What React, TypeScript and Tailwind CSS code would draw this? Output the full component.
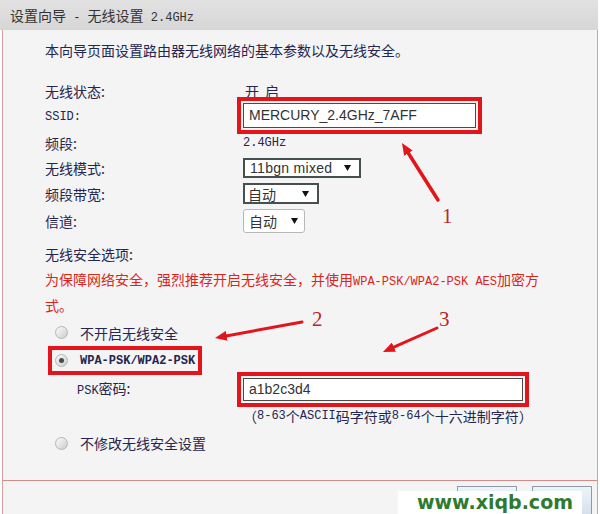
import React from 'react';

const mono = "font-['Liberation_Mono',monospace]";
const arial = "font-['Liberation_Sans',Arial,sans-serif]";

const Caret = () => (
  <svg width="7" height="6" viewBox="0 0 7 6" className="shrink-0">
    <path d="M0 0h7L3.5 6z" fill="#111" />
  </svg>
);

const Radio = ({ checked = false }: { checked?: boolean }) => (
  <span className="w-[13px] h-[13px] shrink-0 rounded-full border border-[#b4b4b4] bg-linear-to-br from-[#fbfbfb] via-[#e4e4e4] to-[#cdcdcd] flex items-center justify-center">
    {checked && <span className="w-[5px] h-[5px] rounded-full bg-[#4a4a4a]" />}
  </span>
);

const Row = ({ label, h, children }: { label: React.ReactNode; h: string; children?: React.ReactNode }) => (
  <div className={`flex items-center ${h}`}>
    <div className="w-[198px] shrink-0">{label}</div>
    <div className="flex items-center">{children}</div>
  </div>
);

export default function App() {
  return (
    <div className="relative w-[600px] h-[514px] overflow-hidden bg-white font-['Noto_Sans_CJK_SC',sans-serif] text-[14px] leading-none text-[#25254f]">
      {/* title bar */}
      <div className="h-[30px] mr-[2px] pl-[10px] leading-[30px] whitespace-pre bg-linear-to-b from-[#e2e2e2] to-[#d6d6d6] text-[#333]">
        <span>设置向导</span>
        <span className={mono + ' text-[12px]'}>{' - '}</span>
        <span>无线设置</span>
        <span className={mono + ' text-[12px]'}>{' 2.4GHz'}</span>
      </div>

      <div className="mx-[2px] h-[484px] border-x border-[#d6a0a0] bg-[#f4f4f4] flex flex-col">
        <div className="pl-[42px]">
          <div className="mt-[10px] h-[20px] flex items-center">本向导页面设置路由器无线网络的基本参数以及无线安全。</div>

          <div className="mt-[20px]">
            <Row label="无线状态:" h="h-[21px]">
              <span className="pl-[2px]">开</span>
              <span className="pl-[6px]">启</span>
            </Row>
            <Row label={<span className={mono + ' text-[12px]'}>SSID:</span>} h="h-[28px]">
              <div className={`w-[233px] h-[25px] border border-[#4a4a4a] bg-white flex items-center pl-[5px] text-[14px] text-[#333] outline-4 outline-offset-2 outline-[#e3151b] ${arial}`}>
                MERCURY_2.4GHz_7AFF
              </div>
            </Row>
            <Row label="频段:" h="h-[27px]">
              <span className={mono + ' text-[12px]'}>2.4GHz</span>
            </Row>
            <Row label="无线模式:" h="h-[24px]">
              <div className={`w-[118px] h-[20px] border-2 border-[#46514f] bg-white flex items-center justify-between pl-[5px] pr-[8px] text-[#333] tracking-[0.3px] ${arial}`}>
                11bgn mixed
                <Caret />
              </div>
            </Row>
            <Row label="频段带宽:" h="h-[27px]">
              <div className="w-[76px] h-[21px] border-2 border-[#46514f] bg-white flex items-center justify-between pl-[3px] pr-[8px] text-[#333]">
                自动
                <Caret />
              </div>
            </Row>
            <Row label="信道:" h="h-[28px]">
              <div className="w-[62px] h-[24px] border border-[#b8b8b8] rounded-[3px] bg-white flex items-center justify-between pl-[5px] pr-[6px] text-[#333]">
                自动
                <Caret />
              </div>
            </Row>
          </div>

          <div className="mt-[8px] h-[22px] flex items-center">无线安全选项:</div>
          <div className="mt-[3px] leading-[23px] text-[#d9261c]">
            为保障网络安全，强烈推荐开启无线安全，并使用<span className={mono + ' text-[12px]'}>WPA-PSK/WPA2-PSK AES</span>加密方
            <br />
            式。
          </div>

          <div className="mt-[4px] h-[23px] flex items-center pl-[10px] gap-[12px]">
            <Radio />
            <span>不开启无线安全</span>
          </div>
          <div className="mt-[5px] h-[23px] flex items-center pl-[10px]">
            <div className="h-[15px] flex items-center gap-[12px] outline-4 outline-offset-[3px] outline-[#e3151b]">
              <Radio checked />
              <span className={mono + ' text-[12px] font-bold'}>WPA-PSK/WPA2-PSK</span>
            </div>
          </div>
          <div className="h-[34px] flex items-center">
            <div className="w-[198px] shrink-0 pl-[32px]">
              <span className={mono + ' text-[12px]'}>PSK</span>密码:
            </div>
            <div className={`w-[280px] h-[23px] border border-[#4a4a4a] bg-white flex items-center pl-[5px] text-[#333] outline-4 outline-offset-2 outline-[#e3151b] ${arial}`}>
              a1b2c3d4
            </div>
          </div>
          <div className="h-[20px] flex items-center pl-[198px]">
            （<span className={mono + ' text-[12px]'}>8-63</span>个<span className={mono + ' text-[12px]'}>ASCII</span>码字符或<span className={mono + ' text-[12px]'}>8-64</span>个十六进制字符）
          </div>
          <div className="mt-[6px] h-[22px] flex items-center pl-[10px] gap-[12px]">
            <Radio />
            <span>不修改无线安全设置</span>
          </div>
        </div>

        <div className="mt-auto h-[34px] border-t border-[#d58a8a] flex justify-end items-start pt-[5px] pr-[5px] gap-[15px]">
          <div className="w-[60px] h-[30px] border border-[#8d9ba6] bg-linear-to-b from-[#eef4f8] to-[#d3e1ec]" />
          <div className="w-[60px] h-[30px] border border-[#8d9ba6] bg-linear-to-b from-[#eef4f8] to-[#d3e1ec]" />
        </div>
      </div>

      {/* annotations */}
      <svg className="absolute inset-0 pointer-events-none" width="600" height="514">
        <defs>
          <marker id="ah" markerWidth="12" markerHeight="10" refX="2" refY="5" orient="auto" markerUnits="userSpaceOnUse">
            <path d="M0 0L12 5L0 10z" fill="#e3151b" />
          </marker>
        </defs>
        <line x1="438" y1="200" x2="407.3" y2="151.5" stroke="#e3151b" strokeWidth="3.5" strokeLinecap="round" markerEnd="url(#ah)" />
        <line x1="302" y1="322" x2="224.8" y2="336.2" stroke="#e3151b" strokeWidth="3" strokeLinecap="round" markerEnd="url(#ah)" />
        <line x1="437" y1="328" x2="392.1" y2="347.9" stroke="#e3151b" strokeWidth="3" strokeLinecap="round" markerEnd="url(#ah)" />
      </svg>
      <span className="absolute left-[442px] top-[206px] font-['Liberation_Serif',serif] text-[21px] text-[#b8282a]">1</span>
      <span className="absolute left-[312px] top-[309px] font-['Liberation_Serif',serif] text-[21px] text-[#b8282a]">2</span>
      <span className="absolute left-[439px] top-[309px] font-['Liberation_Serif',serif] text-[21px] text-[#b8282a]">3</span>

      <div className="absolute left-[398px] top-[491px] w-[184px] h-[23px] bg-white flex items-center justify-center pl-[10px] font-['DejaVu_Sans',sans-serif] text-[19px] leading-none font-bold text-[#2f7a2f]">
        www.xiqb.com
      </div>
    </div>
  );
}
